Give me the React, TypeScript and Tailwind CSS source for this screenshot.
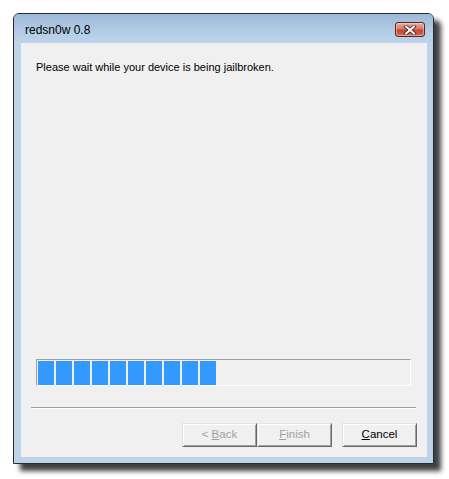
import React from 'react'

const font = { fontFamily: '"Liberation Sans", Arial, sans-serif' }

function CloseButton() {
  return (
    <div className="w-[30px] h-[15px] rounded-[3px] border border-[#5a2424] bg-[linear-gradient(#e8b0a4,#d27a67_45%,#c2472f_55%,#d0705a)] flex items-center justify-center shadow-[inset_0_0_0_1px_rgba(255,220,210,0.5)]">
      <svg width="14" height="10" viewBox="0 0 14 10">
        <path d="M3 1.5 L11 8.5 M11 1.5 L3 8.5" stroke="#3b2020" strokeWidth="3.6" strokeLinecap="square" />
        <path d="M3 1.5 L11 8.5 M11 1.5 L3 8.5" stroke="#ffffff" strokeWidth="2" strokeLinecap="square" />
      </svg>
    </div>
  )
}

function WinButton({ children, disabled }: { children: React.ReactNode; disabled?: boolean }) {
  return (
    <div
      className={
        'w-[75px] h-[24px] flex items-center justify-center text-[11.5px] bg-[#f0f0f0] border border-t-[#e3e3e3] border-l-[#e3e3e3] border-r-[#696969] border-b-[#696969] shadow-[inset_1px_1px_0_#ffffff,inset_-1px_-1px_0_#a0a0a0] ' +
        (disabled ? 'text-[#a0a0a0]' : 'text-black')
      }
    >
      {children}
    </div>
  )
}

export default function App() {
  const blocks = Array.from({ length: 10 })
  return (
    <div className="w-[449px] h-[479px] bg-white pt-[13px] pl-[13px]" style={font}>
      <div className="w-[421px] h-[451px] border border-[#2b2b2b] rounded-t-[6px] bg-[#bcd3ea] flex flex-col shadow-[7px_7px_5px_rgba(0,0,0,0.75)]">
        <div className="h-[29px] rounded-t-[5px] bg-[linear-gradient(#9db9d8,#b3cce6_60%,#bcd3ea)] flex items-start justify-between pl-[11px] pr-[8px]">
          <span className="text-[12px] text-black mt-[9px] leading-[14px]">redsn0w 0.8</span>
          <div className="mt-[8px]">
            <CloseButton />
          </div>
        </div>
        <div className="flex-1 flex flex-col pl-[7px] pr-[6px] pb-[6px]">
          <div className="flex-1 bg-[#f0f0f0] flex flex-col">
            <p className="mt-[16px] ml-[15px] text-[11px] leading-[16px] text-black">
              Please wait while your device is being jailbroken.
            </p>
            <div className="mt-[284px] ml-[15px] w-[375px] h-[27px] border border-t-[#a0a0a0] border-l-[#a0a0a0] border-r-white border-b-white p-[1px] flex gap-[2px]">
              {blocks.map((_, i) => (
                <div key={i} className="w-[16px] h-[24px] bg-[#3399ff]" />
              ))}
            </div>
            <div className="mt-[21px] ml-[10px] w-[385px] h-[1px] bg-[#a0a0a0]" />
            <div className="ml-[10px] w-[385px] h-[1px] bg-white" />
            <div className="mt-[14px] flex justify-end pr-[10px]">
              <WinButton disabled>
                &lt; <span className="underline ml-[3px]">B</span>ack
              </WinButton>
              <WinButton disabled>
                <span className="underline">F</span>inish
              </WinButton>
              <div className="w-[10px]" />
              <WinButton>
                <span className="underline">C</span>ancel
              </WinButton>
            </div>
          </div>
        </div>
      </div>
    </div>
  )
}
